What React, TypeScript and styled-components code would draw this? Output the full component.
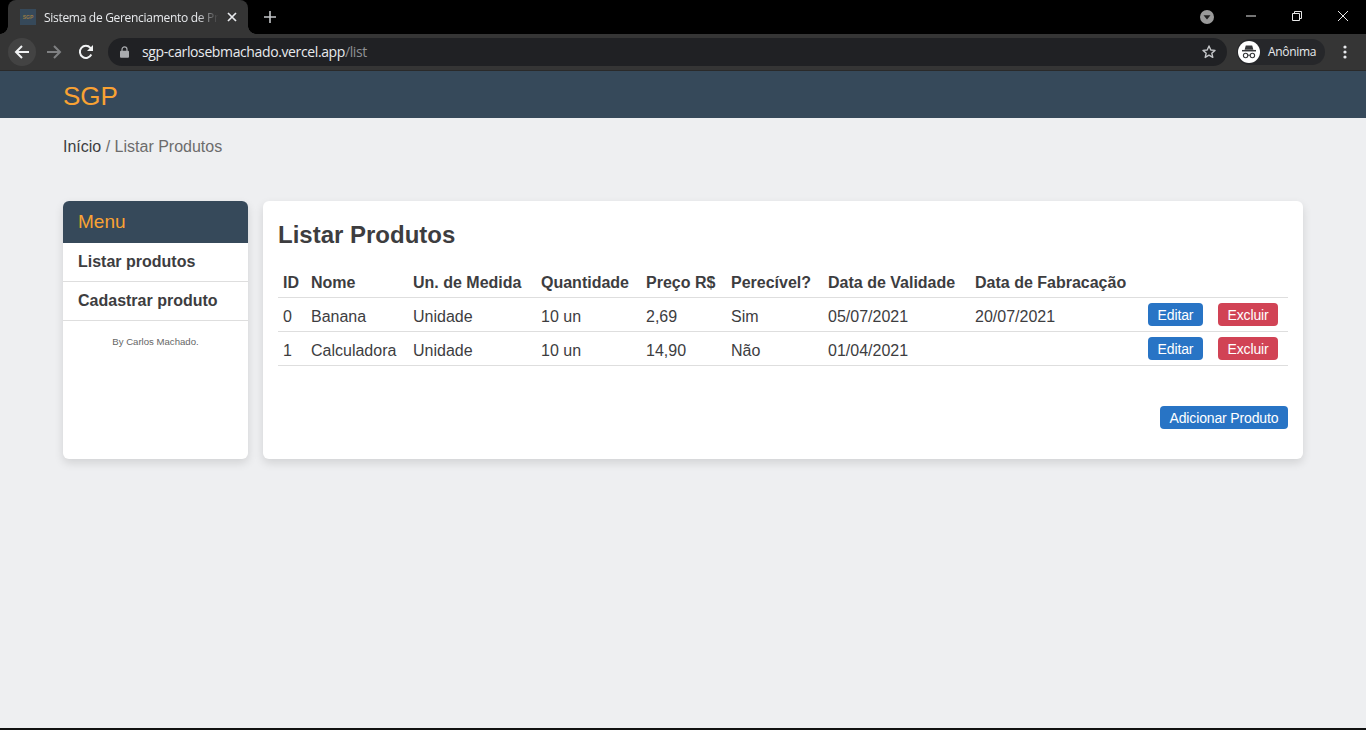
import React from 'react';
import styled, { createGlobalStyle } from 'styled-components';

const GlobalStyle = createGlobalStyle`
  html, body {
    margin: 0;
    padding: 0;
    height: 100%;
    overflow: hidden;
    background: #eeeff1;
  }
  * {
    box-sizing: border-box;
  }
`;

const products = [
  { id: 0, name: 'Banana', unit: 'Unidade', amount: '10 un', price: '2,69', perishable: 'Sim', expires: '05/07/2021', made: '20/07/2021' },
  { id: 1, name: 'Calculadora', unit: 'Unidade', amount: '10 un', price: '14,90', perishable: 'Não', expires: '01/04/2021', made: '' },
];

const columns = [
  { title: 'ID', width: 28 },
  { title: 'Nome', width: 102 },
  { title: 'Un. de Medida', width: 128 },
  { title: 'Quantidade', width: 105 },
  { title: 'Preço R$', width: 85 },
  { title: 'Perecível?', width: 97 },
  { title: 'Data de Validade', width: 147 },
  { title: 'Data de Fabracação', width: 173 },
  { title: '', width: 145 },
];

const Page = styled.div`
  height: 730px;
  display: flex;
  flex-direction: column;
  font-family: 'Liberation Sans', Arial, sans-serif;
  color: #3d3d3f;
  border-bottom: 2px solid #111;
`;

const TabStrip = styled.div`
  height: 34px;
  background: #000;
  display: flex;
  align-items: flex-end;
  padding-left: 8px;
  font-family: 'Open Sans', sans-serif;
`;

const Tab = styled.div`
  width: 240px;
  height: 34px;
  background: #353535;
  border-radius: 8px 8px 0 0;
  display: flex;
  align-items: center;
  padding: 0 8px 0 12px;
  position: relative;

  &::before,
  &::after {
    content: '';
    position: absolute;
    bottom: 0;
    width: 8px;
    height: 8px;
  }
  &::before {
    left: -8px;
    background: radial-gradient(circle at 0 0, #000 7.5px, #353535 8px);
  }
  &::after {
    right: -8px;
    background: radial-gradient(circle at 100% 0, #000 7.5px, #353535 8px);
  }
`;

const Favicon = styled.div`
  width: 16px;
  height: 16px;
  background: #36495a;
  color: #9a7a45;
  font-size: 5px;
  font-weight: 700;
  font-family: 'Liberation Sans', sans-serif;
  display: flex;
  align-items: center;
  justify-content: center;
  flex: none;
`;

const TabTitle = styled.div`
  flex: 1;
  margin-left: 8px;
  width: 0;
  font-size: 12px;
  letter-spacing: -0.3px;
  color: #e8eaed;
  white-space: nowrap;
  overflow: hidden;
  mask-image: linear-gradient(to right, #000 85%, transparent 97%);
`;

const IconSlot = styled.div<{ $width?: number; $left?: number }>`
  width: ${(p) => p.$width ?? 16}px;
  margin-left: ${(p) => p.$left ?? 0}px;
  flex: none;
  display: flex;
  align-items: center;
  justify-content: center;
`;

const StripSpacer = styled.div`
  flex: 1;
`;

const StripRight = styled.div`
  height: 34px;
  display: flex;
  align-items: center;
`;

const WindowButton = styled.div`
  width: 46px;
  height: 30px;
  margin-top: -2px;
  display: flex;
  align-items: center;
  justify-content: center;
`;

const Toolbar = styled.div`
  height: 37px;
  background: #353535;
  border-bottom: 1px solid #2a2a2a;
  display: flex;
  align-items: center;
  padding: 0 0 1px 8px;
  font-family: 'Open Sans', sans-serif;
`;

const NavButton = styled.div<{ $active?: boolean }>`
  width: 28px;
  height: 28px;
  margin-right: 4px;
  border-radius: 50%;
  background: ${(p) => (p.$active ? '#434343' : 'transparent')};
  display: flex;
  align-items: center;
  justify-content: center;
  flex: none;
`;

const AddressBar = styled.div`
  width: 1119px;
  height: 28px;
  margin-left: 4px;
  border-radius: 14px;
  background: #202124;
  display: flex;
  align-items: center;
  padding: 0 10px 0 11px;
  font-size: 14px;
  flex: none;
`;

const Url = styled.div`
  flex: 1;
  margin-left: 12px;
  color: #e8eaed;
  letter-spacing: -0.38px;
  span {
    color: #8f9194;
  }
`;

const ProfilePill = styled.div`
  width: 88px;
  height: 26px;
  margin-left: 10px;
  border-radius: 13px;
  background: #26272a;
  display: flex;
  align-items: center;
  padding-left: 1px;
  color: #e8eaed;
  font-size: 12px;
  letter-spacing: -0.3px;
  flex: none;
`;

const Avatar = styled.div`
  width: 22px;
  height: 22px;
  border-radius: 50%;
  background: #fff;
  display: flex;
  align-items: center;
  justify-content: center;
  margin-right: 8px;
`;

const MenuDots = styled.div`
  margin-left: 12px;
  width: 16px;
  display: flex;
  justify-content: center;
`;

const SiteHeader = styled.header`
  height: 47px;
  background: #36495a;
  padding: 3px 0 0 63px;
  display: flex;
  align-items: center;
  font-size: 26px;
  color: #f9a233;
`;

const Breadcrumb = styled.nav`
  margin: 20px 63px 0;
  font-size: 16px;
  line-height: 18px;
  color: #6c6c6c;
  a {
    color: #3d3d3f;
  }
`;

const Content = styled.main`
  margin: 45px 63px 0;
  display: flex;
  gap: 15px;
  align-items: stretch;
`;

const Sidebar = styled.aside`
  width: 185px;
  flex: none;
  background: #fff;
  border-radius: 6px;
  box-shadow: 0 4px 10px rgba(0, 0, 0, 0.12);
  overflow: hidden;
`;

const SidebarTitle = styled.div`
  height: 42px;
  background: #36495a;
  color: #f9a233;
  font-size: 19px;
  padding-left: 15px;
  display: flex;
  align-items: center;
`;

const SidebarLink = styled.div`
  height: 39px;
  padding: 0 15px;
  display: flex;
  align-items: center;
  font-size: 16px;
  font-weight: 700;
  border-bottom: 1px solid #dedede;
`;

const Credit = styled.div`
  margin-top: 15px;
  text-align: center;
  font-size: 9.6px;
  line-height: 12px;
  color: #666;
`;

const Card = styled.section`
  flex: 1;
  height: 258px;
  background: #fff;
  border-radius: 6px;
  box-shadow: 0 4px 10px rgba(0, 0, 0, 0.12);
  padding: 20px 15px 0;
`;

const Title = styled.h1`
  margin: 0;
  font-size: 24px;
  line-height: 28px;
  font-weight: 700;
`;

const Table = styled.table`
  margin-top: 17px;
  width: 1010px;
  table-layout: fixed;
  border-collapse: collapse;
  font-size: 16px;
`;

const HeadCell = styled.th`
  height: 31px;
  padding: 4px 5px 0;
  text-align: left;
  font-weight: 700;
  white-space: nowrap;
  border-bottom: 1px solid #dedede;
`;

const Cell = styled.td`
  height: 34px;
  padding: 5px 5px 0;
  white-space: nowrap;
  border-bottom: 1px solid #dedede;
`;

const ActionCell = styled(Cell)`
  padding: 0 5px;
`;

const Actions = styled.div`
  display: flex;
  gap: 15px;
`;

const Button = styled.button<{ $danger?: boolean }>`
  height: 23px;
  padding: 1px 9.6px 0;
  border: none;
  border-radius: 4px;
  background: ${(p) => (p.$danger ? '#d14355' : '#2874c5')};
  color: #fff;
  font-family: inherit;
  font-size: 14px;
  letter-spacing: -0.14px;
  line-height: 22px;
`;

const Footer = styled.div`
  margin-top: 40px;
  display: flex;
  justify-content: flex-end;
`;

function App() {
  return (
    <Page>
      <GlobalStyle />
      <TabStrip>
        <Tab>
          <Favicon>SGP</Favicon>
          <TabTitle>Sistema de Gerenciamento de Produtos</TabTitle>
          <IconSlot>
            <svg width="10" height="10" viewBox="0 0 10 10">
              <path d="M1 1l8 8M9 1l-8 8" stroke="#e8eaed" strokeWidth="1.7" />
            </svg>
          </IconSlot>
        </Tab>
        <IconSlot $width={14} $left={15}>
          <StripRight>
            <svg width="12" height="12" viewBox="0 0 12 12">
              <path d="M6 0v12M0 6h12" stroke="#c4c6c9" strokeWidth="1.6" />
            </svg>
          </StripRight>
        </IconSlot>
        <StripSpacer />
        <StripRight>
          <IconSlot $width={14}>
            <svg width="14" height="14" viewBox="0 0 14 14">
              <circle cx="7" cy="7" r="7" fill="#9a9a9a" />
              <path d="M3.5 5.2h7L7 9.6z" fill="#222" />
            </svg>
          </IconSlot>
          <IconSlot $width={14}>{null}</IconSlot>
          <WindowButton>
            <svg width="10" height="10" viewBox="0 0 10 10">
              <path d="M0 5h10" stroke="#e8e8e8" />
            </svg>
          </WindowButton>
          <WindowButton>
            <svg width="10" height="10" viewBox="0 0 10 10" fill="none">
              <path d="M.5 2.5h7v7h-7zM2.5 2.5v-2h7v7h-2" stroke="#e8e8e8" />
            </svg>
          </WindowButton>
          <WindowButton>
            <svg width="10" height="10" viewBox="0 0 10 10">
              <path d="M0 0l10 10M10 0L0 10" stroke="#e8e8e8" />
            </svg>
          </WindowButton>
        </StripRight>
      </TabStrip>

      <Toolbar>
        <NavButton $active>
          <svg width="16" height="16" viewBox="0 0 16 16" fill="none">
            <path d="M15 8H2M8 2L2 8l6 6" stroke="#f1f3f4" strokeWidth="2" />
          </svg>
        </NavButton>
        <NavButton>
          <svg width="16" height="16" viewBox="0 0 16 16" fill="none">
            <path d="M1 8h13M8 2l6 6-6 6" stroke="#7f8082" strokeWidth="2" />
          </svg>
        </NavButton>
        <NavButton>
          <svg width="16" height="16" viewBox="0 0 16 16" fill="none">
            <path d="M13.3 10.5A6 6 0 1 1 12.4 3.9L14 5.5" stroke="#f1f3f4" strokeWidth="2" />
            <path d="M15 1v6H9z" fill="#f1f3f4" />
          </svg>
        </NavButton>
        <AddressBar>
          <svg width="11" height="12" viewBox="0 0 11 12" fill="none">
            <path d="M3 5.5V3.4a2.5 2.5 0 0 1 5 0v2.1" stroke="#a9abae" strokeWidth="1.2" />
            <rect x="1" y="4.8" width="9" height="7" rx="1" fill="#a9abae" />
          </svg>
          <Url>
            sgp-carlosebmachado.vercel.app<span>/list</span>
          </Url>
          <svg width="16" height="16" viewBox="0 0 16 16" fill="none">
            <path
              d="M8 2l1.8 4 4.2.4-3.2 2.8 1 4.2L8 11.2 4.2 13.4l1-4.2L2 6.4 6.2 6z"
              stroke="#c4c6c9"
              strokeWidth="1.4"
              strokeLinejoin="round"
            />
          </svg>
        </AddressBar>
        <ProfilePill>
          <Avatar>
            <svg width="18" height="16" viewBox="0 0 18 16" fill="none">
              <path d="M5.8 1.5h6.4l1.2 4.2H4.6z" fill="#36373a" />
              <path d="M2 6.7h14" stroke="#36373a" strokeWidth="1.5" />
              <circle cx="5.6" cy="11.5" r="2.2" stroke="#36373a" strokeWidth="1.1" />
              <circle cx="12.4" cy="11.5" r="2.2" stroke="#36373a" strokeWidth="1.1" />
              <path d="M7.8 11.2h2.4" stroke="#36373a" strokeWidth="1" />
            </svg>
          </Avatar>
          Anônima
        </ProfilePill>
        <MenuDots>
          <svg width="4" height="14" viewBox="0 0 4 14">
            <circle cx="2" cy="2" r="1.6" fill="#e8eaed" />
            <circle cx="2" cy="7" r="1.6" fill="#e8eaed" />
            <circle cx="2" cy="12" r="1.6" fill="#e8eaed" />
          </svg>
        </MenuDots>
      </Toolbar>

      <SiteHeader>SGP</SiteHeader>

      <Breadcrumb>
        <a>Início</a> / Listar Produtos
      </Breadcrumb>

      <Content>
        <Sidebar>
          <SidebarTitle>Menu</SidebarTitle>
          <SidebarLink>Listar produtos</SidebarLink>
          <SidebarLink>Cadastrar produto</SidebarLink>
          <Credit>By Carlos Machado.</Credit>
        </Sidebar>
        <Card>
          <Title>Listar Produtos</Title>
          <Table>
            <colgroup>
              {columns.map((c, i) => (
                <col key={i} width={c.width} />
              ))}
            </colgroup>
            <thead>
              <tr>
                {columns.map((c, i) => (
                  <HeadCell key={i}>{c.title}</HeadCell>
                ))}
              </tr>
            </thead>
            <tbody>
              {products.map((p) => (
                <tr key={p.id}>
                  <Cell>{p.id}</Cell>
                  <Cell>{p.name}</Cell>
                  <Cell>{p.unit}</Cell>
                  <Cell>{p.amount}</Cell>
                  <Cell>{p.price}</Cell>
                  <Cell>{p.perishable}</Cell>
                  <Cell>{p.expires}</Cell>
                  <Cell>{p.made}</Cell>
                  <ActionCell>
                    <Actions>
                      <Button>Editar</Button>
                      <Button $danger>Excluir</Button>
                    </Actions>
                  </ActionCell>
                </tr>
              ))}
            </tbody>
          </Table>
          <Footer>
            <Button>Adicionar Produto</Button>
          </Footer>
        </Card>
      </Content>
    </Page>
  );
}

export default App;
